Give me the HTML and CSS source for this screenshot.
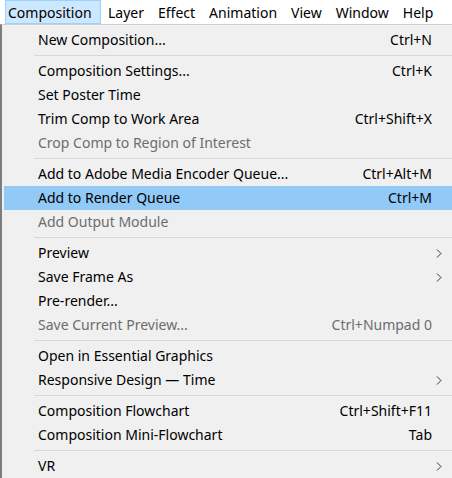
FILE: index.html
```html
<!DOCTYPE html>
<html>
<head>
<meta charset="utf-8">
<link rel="stylesheet" href="styles.css">
</head>
<body>
<div class="menubar">
  <div class="mb-item active">Composition</div>
  <div class="mb-item">Layer</div>
  <div class="mb-item">Effect</div>
  <div class="mb-item">Animation</div>
  <div class="mb-item">View</div>
  <div class="mb-item">Window</div>
  <div class="mb-item">Help</div>
</div>
<div class="menu">
  <div class="row"><span class="label">New Composition...</span><span class="key">Ctrl+N</span><span class="arrow"></span></div>
  <div class="sep"></div>
  <div class="row"><span class="label">Composition Settings...</span><span class="key">Ctrl+K</span><span class="arrow"></span></div>
  <div class="row"><span class="label">Set Poster Time</span><span class="key"></span><span class="arrow"></span></div>
  <div class="row"><span class="label">Trim Comp to Work Area</span><span class="key">Ctrl+Shift+X</span><span class="arrow"></span></div>
  <div class="row disabled"><span class="label">Crop Comp to Region of Interest</span><span class="key"></span><span class="arrow"></span></div>
  <div class="sep"></div>
  <div class="row"><span class="label">Add to Adobe Media Encoder Queue...</span><span class="key">Ctrl+Alt+M</span><span class="arrow"></span></div>
  <div class="row hover"><span class="label">Add to Render Queue</span><span class="key">Ctrl+M</span><span class="arrow"></span></div>
  <div class="row disabled"><span class="label">Add Output Module</span><span class="key"></span><span class="arrow"></span></div>
  <div class="sep"></div>
  <div class="row"><span class="label">Preview</span><span class="key"></span><span class="arrow"><svg width="6" height="9" viewBox="0 0 6 9"><polyline points="1,0.5 5,4.5 1,8.5" fill="none" stroke="#333" stroke-width="1"/></svg></span></div>
  <div class="row"><span class="label">Save Frame As</span><span class="key"></span><span class="arrow"><svg width="6" height="9" viewBox="0 0 6 9"><polyline points="1,0.5 5,4.5 1,8.5" fill="none" stroke="#333" stroke-width="1"/></svg></span></div>
  <div class="row"><span class="label">Pre-render...</span><span class="key"></span><span class="arrow"></span></div>
  <div class="row disabled"><span class="label">Save Current Preview...</span><span class="key">Ctrl+Numpad 0</span><span class="arrow"></span></div>
  <div class="sep"></div>
  <div class="row"><span class="label">Open in Essential Graphics</span><span class="key"></span><span class="arrow"></span></div>
  <div class="row"><span class="label">Responsive Design — Time</span><span class="key"></span><span class="arrow"><svg width="6" height="9" viewBox="0 0 6 9"><polyline points="1,0.5 5,4.5 1,8.5" fill="none" stroke="#333" stroke-width="1"/></svg></span></div>
  <div class="sep"></div>
  <div class="row"><span class="label">Composition Flowchart</span><span class="key">Ctrl+Shift+F11</span><span class="arrow"></span></div>
  <div class="row"><span class="label">Composition Mini-Flowchart</span><span class="key">Tab</span><span class="arrow"></span></div>
  <div class="sep"></div>
  <div class="row"><span class="label">VR</span><span class="key"></span><span class="arrow"><svg width="6" height="9" viewBox="0 0 6 9"><polyline points="1,0.5 5,4.5 1,8.5" fill="none" stroke="#333" stroke-width="1"/></svg></span></div>
</div>
</body>
</html>
```
FILE: styles.css
```css
html, body {
  margin: 0;
  padding: 0;
  background: #ffffff;
  overflow: hidden;
}
body {
  width: 452px;
  height: 478px;
  font-family: "Noto Sans", "Open Sans", sans-serif;
  font-size: 14px;
  color: #000;
}
.menubar {
  display: flex;
  height: 24px;
  background: #ffffff;
  padding-left: 5px;
  box-sizing: border-box;
  white-space: nowrap;
}
.mb-item {
  height: 24px;
  line-height: 25px;
  padding: 0 7px;
  box-sizing: border-box;
}
.mb-item.active {
  background: #cce8ff;
  border: 1px solid #99d1ff;
  line-height: 23px;
  width: 96px;
  padding: 0 2px;
}
.menu {
  background: #f0f0f0;
  border-top: 1px solid #cfcfcf;
  border-left: 2px solid #7d7d7d;
  padding: 3px 0 0 2px;
  height: 454px;
  box-sizing: border-box;
}
.row {
  display: grid;
  grid-template-columns: 1fr auto 20px;
  height: 24px;
  line-height: 24px;
  padding-left: 34px;
  white-space: nowrap;
}
.row.hover {
  background: #91c9f7;
}
.row.disabled {
  color: #6d6d6d;
}
.key {
  text-align: right;
}
.arrow {
  display: flex;
  align-items: center;
  padding-left: 4px;
}
.sep {
  height: 1px;
  background: #d7d7d7;
  margin: 3px 0 3px 30px;
}
```
